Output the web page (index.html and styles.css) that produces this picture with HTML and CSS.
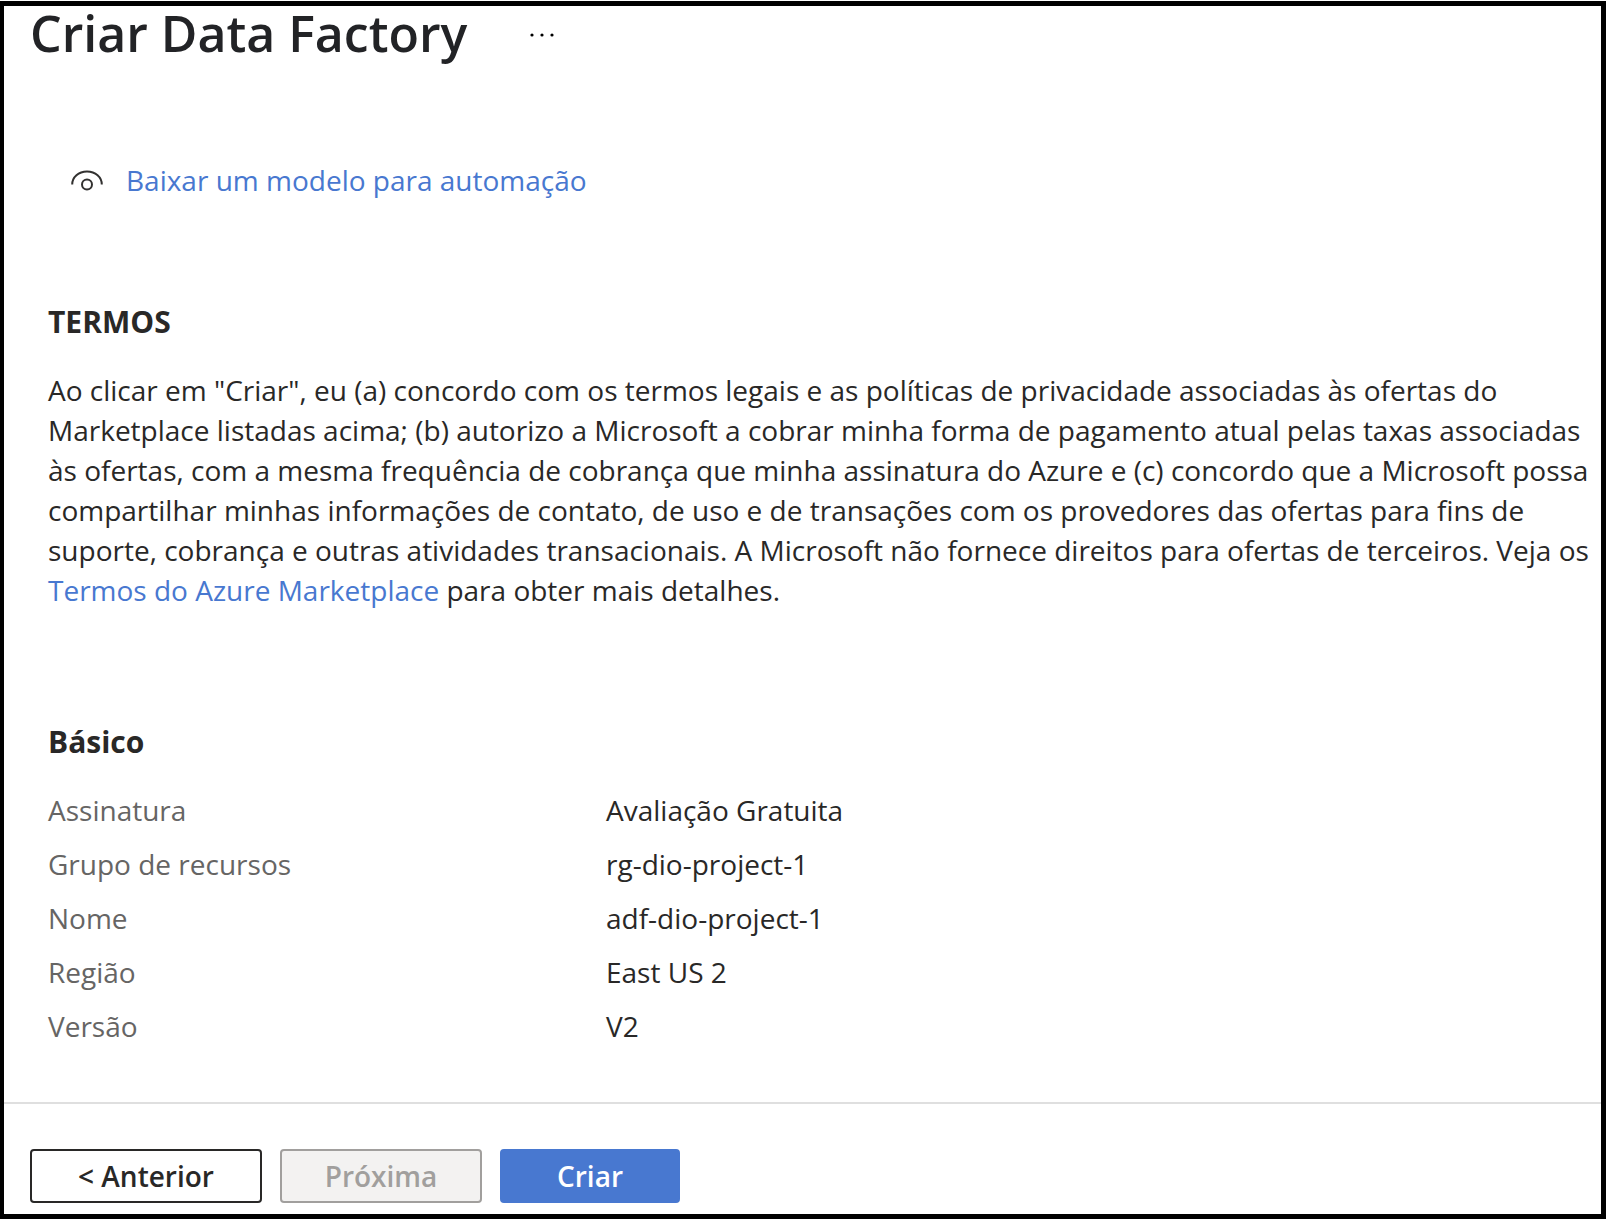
FILE: index.html
```html
<!DOCTYPE html>
<html lang="pt-BR">
<head>
<meta charset="utf-8">
<title>Criar Data Factory</title>
<link rel="stylesheet" href="styles.css">
</head>
<body>
<div class="page">
  <header class="header">
    <h1 class="title">Criar Data Factory</h1>
    <button class="more" type="button" aria-label="Mais">
      <svg width="26" height="4" viewBox="0 0 26 4" aria-hidden="true"><circle cx="3" cy="2" r="1.6"/><circle cx="13" cy="2" r="1.6"/><circle cx="23" cy="2" r="1.6"/></svg>
    </button>
  </header>
  <main class="content">
    <div class="template">
      <svg class="eye" width="34" height="24" viewBox="0 0 34 24" aria-hidden="true"><path d="M2.2 16.5C2.2 9.200 8.500 3.500 17 3.500s14.800 5.700 14.800 13"/><circle cx="17" cy="16.500" r="5"/></svg>
      <a class="link" href="#">Baixar um modelo para automação</a>
    </div>
    <section class="terms">
      <h2 class="heading">TERMOS</h2>
      <p class="text">Ao clicar em "Criar", eu (a) concordo com os termos legais e as políticas de privacidade associadas às ofertas do Marketplace listadas acima; (b) autorizo a Microsoft a cobrar minha forma de pagamento atual pelas taxas associadas às ofertas, com a mesma frequência de cobrança que minha assinatura do Azure e (c) concordo que a Microsoft possa compartilhar minhas informações de contato, de uso e de transações com os provedores das ofertas para fins de suporte, cobrança e outras atividades transacionais. A Microsoft não fornece direitos para ofertas de terceiros. Veja os <a class="link" href="#">Termos do Azure Marketplace</a> para obter mais detalhes.</p>
    </section>
    <section class="basics">
      <h2 class="heading">Básico</h2>
      <dl class="details">
        <dt>Assinatura</dt><dd>Avaliação Gratuita</dd>
        <dt>Grupo de recursos</dt><dd>rg-dio-project-1</dd>
        <dt>Nome</dt><dd>adf-dio-project-1</dd>
        <dt>Região</dt><dd>East US 2</dd>
        <dt>Versão</dt><dd>V2</dd>
      </dl>
    </section>
  </main>
  <footer class="footer">
    <button class="button previous" type="button">&lt; Anterior</button>
    <button class="button next" type="button" disabled>Próxima</button>
    <button class="button create" type="button">Criar</button>
  </footer>
</div>
</body>
</html>
```
FILE: styles.css
```css
* { box-sizing: border-box; }
body {
  margin: 0;
  padding-top: 1px;
  min-height: 100vh;
  display: flex;
  font-family: "Open Sans", "Noto Sans", sans-serif;
  font-size: 28px;
  line-height: 40px;
  color: #292827;
  background: #fff;
}
h1, h2, p, dl, dd { margin: 0; }
.page {
  flex: 1;
  display: flex;
  flex-direction: column;
  border: 5px solid #000;
  border-left-width: 4px;
}
.header {
  display: flex;
  align-items: center;
  gap: 62px;
  padding-left: 26px;
}
.title { font-size: 50px; line-height: 54px; font-weight: 600; color: #222326; }
.more { border: 0; padding: 4px 0 0; background: none; display: flex; }
.content { flex: 1; padding: 100px 8px 0 44px; }
.template { display: flex; align-items: center; gap: 22px; padding-left: 22px; }
.eye { fill: none; stroke: #323130; stroke-width: 2; }
.link { color: #4878d0; text-decoration: none; }
.terms { padding-top: 102px; }
.basics { padding-top: 112px; }
.heading { font-size: 30px; line-height: 40px; font-weight: 700; margin-bottom: 28px; }
.details {
  display: grid;
  grid-template-columns: 558px 1fr;
  row-gap: 14px;
}
.details dt { color: #666564; }
.footer {
  display: flex;
  gap: 18px;
  padding: 45px 26px 11px;
  border-top: 2px solid #dfdfdf;
}
.button {
  height: 54px;
  border: 2px solid #292827;
  border-radius: 4px;
  font: 600 28px/40px "Open Sans", "Noto Sans", sans-serif;
  background: #fff;
  color: #292827;
}
.previous { width: 232px; }
.next { width: 202px; background: #f3f2f1; border-color: #a19f9d; color: #a19f9d; }
.create { width: 180px; background: #4878d0; border-color: #4878d0; color: #fff; }
```
